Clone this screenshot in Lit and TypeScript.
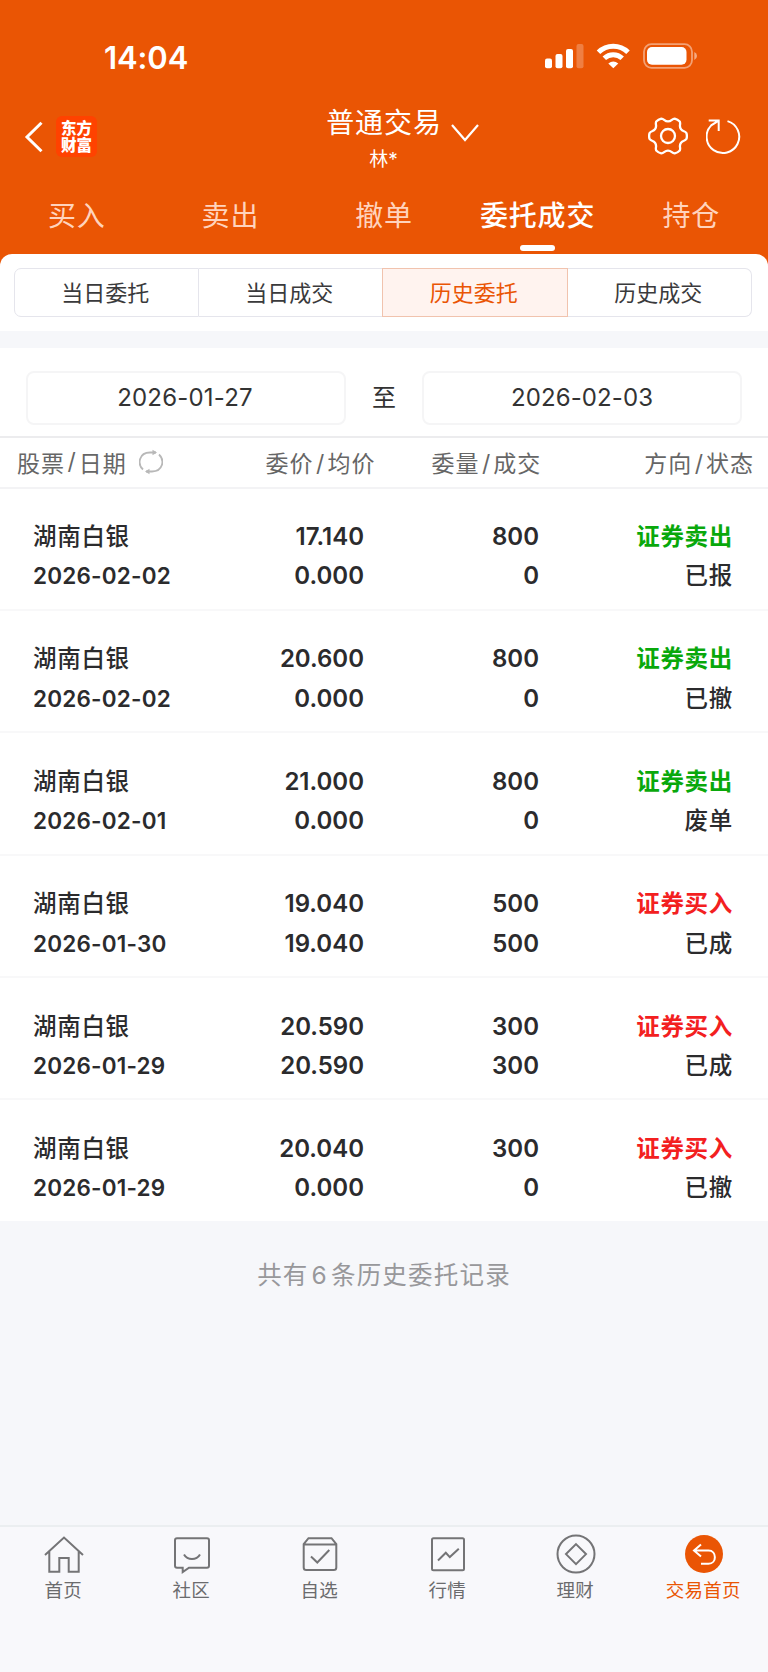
import { LitElement, html, css, svg } from "lit";
import { customElement } from "lit/decorators.js";
import { classMap } from "lit/directives/class-map.js";

interface Order {
  date: string;
  price: string;
  avg: string;
  qty: string;
  filled: string;
  side: "buy" | "sell";
  status: string;
}

const ORDERS: Order[] = [
  { date: "2026-02-02", price: "17.140", avg: "0.000", qty: "800", filled: "0", side: "sell", status: "已报" },
  { date: "2026-02-02", price: "20.600", avg: "0.000", qty: "800", filled: "0", side: "sell", status: "已撤" },
  { date: "2026-02-01", price: "21.000", avg: "0.000", qty: "800", filled: "0", side: "sell", status: "废单" },
  { date: "2026-01-30", price: "19.040", avg: "19.040", qty: "500", filled: "500", side: "buy", status: "已成" },
  { date: "2026-01-29", price: "20.590", avg: "20.590", qty: "300", filled: "300", side: "buy", status: "已成" },
  { date: "2026-01-29", price: "20.040", avg: "0.000", qty: "300", filled: "0", side: "buy", status: "已撤" },
];

const NAV = [
  { label: "首页", icon: svg`<path d="M1 18.5 20 1l19 17.5M5.3 15v20.3h10V21.5h9.4v13.8h10V15"/>` },
  { label: "社区", icon: svg`<path d="M5 1.7h30q2 0 2 2v25.5q0 2-2 2H17l-6.300 4.300v-4.300H5q-2 0-2-2V3.700q0-2 2-2ZM12 18c3.500 6 12.500 6 16 0"/>` },
  { label: "自选", icon: svg`<path d="M8.500 1.700h23l4.800 6v23.300q0 2.500-2.500 2.500H6.200q-2.500 0-2.500-2.500V7.700ZM3.700 8h32.600M11 20l6.300 6 12-12.500"/>` },
  { label: "行情", icon: svg`<rect x="4" y="1.700" width="32" height="32" rx="1.500"/><path d="m10 24 7.800-7.700 4 4.300 9-8.300"/>` },
  { label: "理财", icon: svg`<circle cx="20" cy="17.600" r="18.500"/><path d="m20 7.600 10 10-10 10-10-10Z"/>` },
  { label: "交易首页", active: true, icon: svg`<circle class="disc" cx="20" cy="17.500" r="19"/><path class="arrow" d="m17 8-7 6 7 6M10 14H24.500c8.500 0 8.500 13.300 0 13.300H17"/>` },
];

/** Outline of a gear with six rounded teeth, centred on the origin. */
function gearPath(tip: number, notch: number): string {
  const at = (deg: number, r: number) => {
    const a = (deg * Math.PI) / 180;
    return `${(r * Math.cos(a)).toFixed(2)} ${(r * Math.sin(a)).toFixed(2)}`;
  };
  let d = `M${at(-9, tip)}`;
  for (let a = 0; a < 360; a += 60) {
    d += `Q${at(a, tip + 0.6)} ${at(a + 9, tip)}Q${at(a + 13, tip - 0.6)} ${at(a + 16.5, notch + 1.6)}Q${at(a + 30, notch - 2)} ${at(a + 43.5, notch + 1.6)}Q${at(a + 47, tip - 0.6)} ${at(a + 51, tip)}`;
  }
  return d + "Z";
}

@customElement("status-bar")
class StatusBar extends LitElement {
  static styles = css`
    :host { display: flex; height: 113px; justify-content: space-between; box-sizing: border-box; padding: 37px 70px 0 104px; color: #fff; }
    .time { font: 600 31px/41px Inter, sans-serif; letter-spacing: -0.100px; }
    .icons { display: block; width: 154px; height: 40px; }
  `;
  render() {
    return html`
      <span class="time">14:04</span>
      <svg class="icons" viewBox="544 37 154 40" fill="#fff">
        <rect x="545" y="58.500" width="7" height="9.700" rx="2"/>
        <rect x="555.500" y="54" width="7" height="14.200" rx="2"/>
        <rect x="566" y="49" width="7" height="19.200" rx="2"/>
        <rect x="576.500" y="44" width="7" height="24.200" rx="2" opacity=".25"/>
        <g fill="none" stroke="#fff" stroke-width="5">
          <path d="M598.500 52.300a21 21 0 0 1 29.500 0"/>
          <path d="M604.300 58.300a13 13 0 0 1 17.900 0"/>
        </g>
        <path d="M608.300 63.400q5-3.900 10 0l-5 4.900Z"/>
        <rect x="644" y="44.200" width="48" height="23.600" rx="7.500" fill="none" stroke="#fff" stroke-width="1.800" opacity=".45"/>
        <rect x="647" y="47" width="39.500" height="17.800" rx="5"/>
        <path d="M694.300 52v8q2.700-1.200 2.700-4t-2.700-4Z" opacity=".5"/>
      </svg>`;
  }
}

@customElement("trade-header")
class TradeHeader extends LitElement {
  static styles = css`
    :host { display: block; color: #fff; }
    .bar { display: grid; grid-template-columns: 1fr auto 1fr; height: 75px; }
    .left { display: flex; align-items: center; gap: 12px; padding: 0 0 29px 24px; height: 46px; }
    .logo { display: grid; place-content: center; width: 41px; height: 41px; border-radius: 6px; background: #ff4200; font: 900 15.500px/17px "Noto Sans CJK SC", sans-serif; text-align: center; }
    .back { padding-top: 1px; }
    .title { position: relative; text-align: center; }
    .name { font-size: 28px; line-height: 36px; letter-spacing: 0.900px; margin-top: -8px; }
    .user { font-size: 19px; line-height: 28px; margin: 5px 1px 0 0; }
    .chev { position: absolute; left: 124px; top: 10px; width: 30px; height: 20px; }
    .right { display: flex; justify-content: flex-end; gap: 18px; padding: 3px 26px 0 0; }
    svg { display: block; fill: none; stroke: #fff; }
    .tabs { display: grid; grid-template-columns: repeat(5, 1fr); height: 66px; }
    .tab { display: flex; flex-direction: column; align-items: center; font-size: 28px; line-height: 40px; letter-spacing: 0.800px; color: #ffd3bd; padding-top: 8px; }
    .on { color: #fff; font-weight: 500; }
    .mark { width: 35px; height: 5.500px; border-radius: 3px; background: #fff; margin-top: 9px; }
  `;
  render() {
    return html`
      <div class="bar">
        <div class="left">
          <svg class="back" width="20" height="32" viewBox="0 0 20 32" stroke-width="3"><path d="M17.500 1.800 3 16l14.500 14.200"/></svg>
          <div class="logo"><span>东方<br>财富</span></div>
        </div>
        <div class="title">
          <div class="name">普通交易</div>
          <div class="user">林*</div>
          <svg class="chev" viewBox="0 0 30 20" stroke-width="2.200"><path d="m2 2 13 15L28 2"/></svg>
        </div>
        <div class="right">
          <svg width="40" height="40" viewBox="-20 -20 40 40" stroke-width="2.300" stroke-linejoin="round">
            <circle r="7"/>
            <path d=${gearPath(18.7, 15)}/>
          </svg>
          <svg width="36" height="40" viewBox="0 0 36 40" stroke-width="2"><path d="M21.500 5.100A16.300 16.300 0 1 1 5.200 9.400L12.700 4.600M2.700 4.600h10v10.500"/></svg>
        </div>
      </div>
      <div class="tabs">
        ${["买入", "卖出", "撤单", "委托成交", "持仓"].map((t, i) => html`
          <div class=${classMap({ tab: true, on: i === 3 })}>${t}${i === 3 ? html`<i class="mark"></i>` : ""}</div>`)}
      </div>`;
  }
}

@customElement("order-list")
class OrderList extends LitElement {
  static styles = css`
    :host { display: block; }
    .grid { display: grid; box-sizing: border-box; }
    .head { height: 53px; padding: 0 14px 1px 17px; border-top: 2px solid #ececee; border-bottom: 2px solid #f3f3f5; align-items: center; color: #666; font-size: 23px; letter-spacing: 1px; grid-template-columns: 1fr auto auto auto; }
    .slash { margin: 0 2px 0 2.500px; }
    .first { display: flex; align-items: center; }
    .cycle { display: block; margin: 1px 0 0 12px; fill: none; stroke: #b8b8b8; stroke-width: 1.800; }
    .c2 { margin-right: 56px; }
    .c3 { margin-right: 103px; }
    .row { height: 122.400px; padding: 28.500px 35px 0 33px; border-bottom: 2px solid #f8f8f9; color: #2b2b2d; font: 500 23.500px/39.400px Inter, "Noto Sans CJK SC", sans-serif; grid-template-columns: 1fr 150px 175px 194px; }
    .row:last-child { border-bottom: none; height: 121px; }
    .num { text-align: right; font-weight: 600; font-size: 24px; letter-spacing: 0; }
    .stock { letter-spacing: 0.700px; }
    .date { font-weight: 600; font-size: 22.500px; letter-spacing: 0.200px; }
    .state { text-align: right; letter-spacing: 0.700px; }
    .sell { color: #09a80b; font-weight: 700; }
    .buy { color: #f3201f; font-weight: 700; }
  `;
  render() {
    const h = (a: string, b: string) => html`${a}<span class="slash">/</span>${b}`;
    return html`
      <div class="grid head">
        <div class="first">${h("股票", "日期")}
          <svg class="cycle" width="24" height="26" viewBox="0 0 24 26"><path d="M17 3.500H11C0 3.500-2 15 4 20.500M7 22.500h6c11 0 13-11.500 7-17"/><path d="M13.500 0.700 18 3.500 13.500 6.300ZM10.500 19.700 6 22.500 10.500 25.300Z" fill="#b8b8b8" stroke="none"/></svg>
        </div>
        <div class="c2">${h("委价", "均价")}</div>
        <div class="c3">${h("委量", "成交")}</div>
        <div>${h("方向", "状态")}</div>
      </div>
      <div>
        ${ORDERS.map((o) => html`
          <div class="grid row">
            <div><div class="stock">湖南白银</div><div class="date">${o.date}</div></div>
            <div class="num"><div>${o.price}</div><div>${o.avg}</div></div>
            <div class="num"><div>${o.qty}</div><div>${o.filled}</div></div>
            <div class="state"><div class=${o.side}>${o.side === "sell" ? "证券卖出" : "证券买入"}</div><div>${o.status}</div></div>
          </div>`)}
      </div>`;
  }
}

@customElement("bottom-nav")
class BottomNav extends LitElement {
  static styles = css`
    :host { display: grid; grid-template-columns: repeat(6, 1fr); box-sizing: border-box; height: 147px; border-top: 2px solid #ebeef0; background: #f8f8fb; }
    .item { display: flex; flex-direction: column; align-items: center; padding-top: 8px; color: #6b6b6d; font-size: 18.500px; line-height: 26px; letter-spacing: 0.300px; }
    .label { padding-right: 1.500px; }
    .active { color: #ea5504; }
    svg { display: block; width: 40px; height: 40px; overflow: visible; fill: none; stroke: #747476; stroke-width: 2; margin-bottom: 2px; }
    .disc { fill: #ea5504; stroke: none; }
    .arrow { stroke: #fff; stroke-width: 2; }
  `;
  render() {
    return NAV.map((n) => html`
      <div class=${classMap({ item: true, active: !!n.active })}>
        <svg viewBox="0 -1.500 40 40">${n.icon}</svg><span class="label">${n.label}</span>
      </div>`);
  }
}

@customElement("app-root")
class AppRoot extends LitElement {
  static styles = css`
    :host { display: flex; flex-direction: column; width: 768px; height: 1672px; overflow: hidden; background: #f6f7fa; font-family: Inter, "Noto Sans CJK SC", sans-serif; }
    .top { background: #ea5504; height: 266px; flex: none; }
    .sheet { background: #fff; border-radius: 12px 12px 0 0; margin-top: -12px; flex: none; }
    .seg { display: grid; grid-template-columns: repeat(4, 1fr); margin: 0 16px 0 14px; padding: 14px 0; height: 49px; }
    .opt { display: grid; place-items: center; border: 1.500px solid #e5e5ec; border-left-width: 0; font-size: 22px; color: #3a3a3c; padding: 0 2px 3px 0; }
    .opt:first-child { border-left-width: 1.500px; border-radius: 7px 0 0 7px; }
    .opt:last-child { border-radius: 0 7px 7px 0; }
    .sel { background: #fff3ef; color: #ea5504; border-color: #f1c3ae; box-shadow: -1px 0 #f1c3ae; }
    .band { height: 17px; background: #f6f7fa; }
    .dates { display: grid; grid-template-columns: 320px 1fr 320px; height: 52px; padding: 23px 26px 12.500px; text-align: center; font-size: 24px; color: #333; }
    .date { border: 2px solid #f5f5f6; border-radius: 8px; box-sizing: border-box; line-height: 50px; letter-spacing: 0.100px; }
    .date:first-child { padding-right: 2px; letter-spacing: 0.200px; }
    .to { line-height: 54px; }
    .count { flex: 1; padding-top: 36px; text-align: center; color: #98989b; font-size: 24.500px; line-height: 36px; letter-spacing: 1.200px; }
    .n { margin: 0 3px; }
  `;
  render() {
    return html`
      <div class="top"><status-bar></status-bar><trade-header></trade-header></div>
      <div class="sheet">
        <div class="seg">
          ${["当日委托", "当日成交", "历史委托", "历史成交"].map((t, i) => html`<div class=${classMap({ opt: true, sel: i === 2 })}>${t}</div>`)}
        </div>
        <div class="band"></div>
        <div class="dates"><div class="date">2026-01-27</div><div class="to">至</div><div class="date">2026-02-03</div></div>
        <order-list></order-list>
      </div>
      <div class="count">共有<span class="n">6</span>条历史委托记录</div>
      <bottom-nav></bottom-nav>`;
  }
}
